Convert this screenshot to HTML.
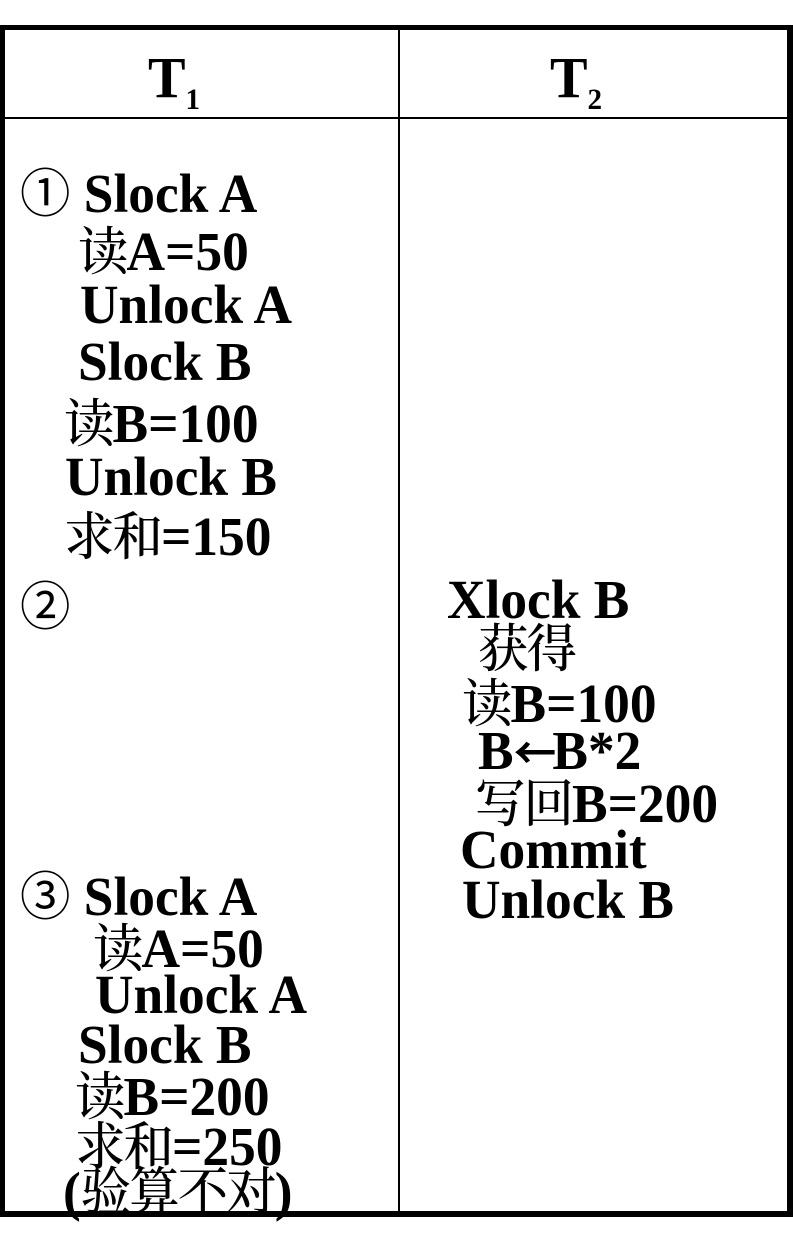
<!DOCTYPE html>
<html><head><meta charset="utf-8"><style>
body{margin:0;width:793px;height:1242px;background:#fff;position:relative;overflow:hidden;font-family:"Liberation Serif","Noto Serif CJK SC",serif;font-weight:bold;color:#000}
.b{position:absolute;background:#000}
.t{position:absolute;font-size:55px;line-height:50px;white-space:nowrap;transform:scaleX(0.97);transform-origin:left}
.c{font-family:"Noto Serif CJK SC",serif;font-weight:500;font-size:52px;letter-spacing:-2px}
.n{font-family:"Noto Sans CJK SC",sans-serif;font-weight:normal;font-size:52px}
.ar{font-family:"Noto Sans CJK SC",sans-serif;font-weight:bold;font-size:44px;letter-spacing:-4px}
sub{font-size:30px;vertical-align:-12px}
</style></head><body>
<div class="b" style="left:0;top:25px;width:793px;height:5px"></div>
<div class="b" style="left:0;top:25px;width:5px;height:1192px"></div>
<div class="b" style="left:787px;top:25px;width:6px;height:1192px"></div>
<div class="b" style="left:0;top:1211px;width:793px;height:6px"></div>
<div class="b" style="left:0;top:117px;width:793px;height:2px"></div>
<div class="b" style="left:398px;top:25px;width:2px;height:1190px"></div>

<div class="t" style="left:148px;top:53px;font-size:58px">T<sub>1</sub></div>
<div class="t" style="left:550px;top:53px;font-size:58px">T<sub>2</sub></div>

<div class="t" style="left:20px;top:165px"><span class="n">①</span> Slock A</div>
<div class="t" style="left:78px;top:223px"><span class="c">读</span>A=50</div>
<div class="t" style="left:80px;top:280px">Unlock A</div>
<div class="t" style="left:78px;top:337px">Slock B</div>
<div class="t" style="left:64px;top:395px"><span class="c">读</span>B=100</div>
<div class="t" style="left:65px;top:452px">Unlock B</div>
<div class="t" style="left:64px;top:508px"><span class="c">求和</span>=150</div>
<div class="t" style="left:20px;top:578px"><span class="n">②</span></div>

<div class="t" style="left:447px;top:575px">Xlock B</div>
<div class="t" style="left:478px;top:620px"><span class="c">获得</span></div>
<div class="t" style="left:462px;top:675px"><span class="c">读</span>B=100</div>
<div class="t" style="left:478px;top:725px">B<span class="ar">←</span>B*2</div>
<div class="t" style="left:475px;top:775px"><span class="c">写回</span>B=200</div>
<div class="t" style="left:460px;top:825px">Commit</div>
<div class="t" style="left:462px;top:875px">Unlock B</div>

<div class="t" style="left:20px;top:868px"><span class="n">③</span> Slock A</div>
<div class="t" style="left:93px;top:920px"><span class="c">读</span>A=50</div>
<div class="t" style="left:95px;top:970px">Unlock A</div>
<div class="t" style="left:78px;top:1020px">Slock B</div>
<div class="t" style="left:75px;top:1068px"><span class="c">读</span>B=200</div>
<div class="t" style="left:75px;top:1118px"><span class="c">求和</span>=250</div>
<div class="t" style="left:63px;top:1163px">(<span class="c">验算不对</span>)</div>
</body></html>
